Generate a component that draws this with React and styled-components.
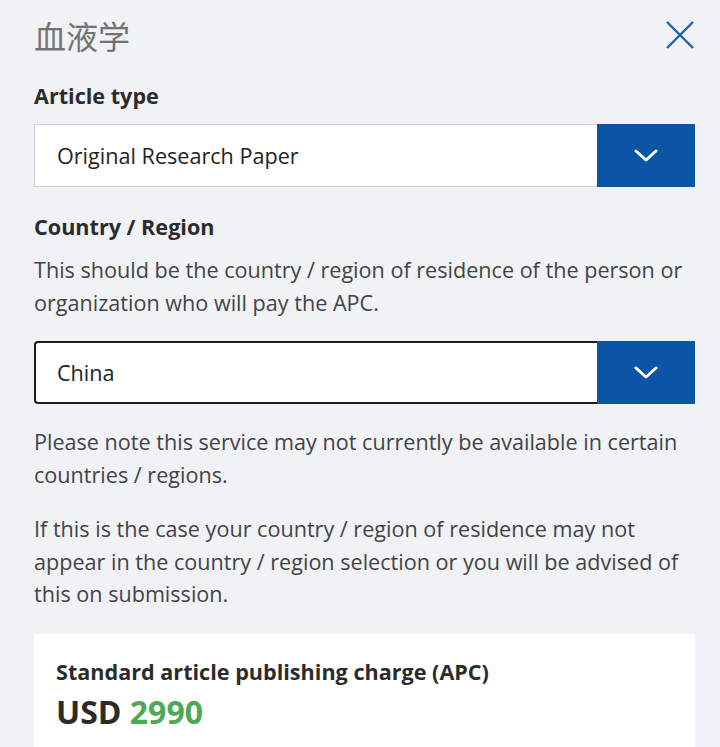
import React from "react";
import styled, { createGlobalStyle } from "styled-components";

const Global = createGlobalStyle`
  html, body { margin: 0; padding: 0; background: #f0f2f5; }
  body { font-family: "Open Sans", "Noto Sans CJK SC", sans-serif; color: #333; }
`;

const Page = styled.div`
  padding: 14px 25px 0 34px;
  min-height: 747px;
  box-sizing: border-box;
`;

const Header = styled.div`
  display: flex;
  align-items: center;
  justify-content: space-between;
  height: 42px;
`;

const Title = styled.h1`
  margin: 0;
  font-family: "Noto Sans CJK SC", sans-serif;
  font-weight: 400;
  font-size: 32px;
  color: #727272;
  line-height: 42px;
`;

const CloseBtn = styled.button`
  border: 0;
  background: none;
  padding: 0;
  width: 30px;
  height: 30px;
  display: flex;
  align-items: center;
  justify-content: center;
`;

const Label = styled.div`
  margin-top: ${p => p.$mt}px;
  font-weight: 700;
  font-size: 21.6px;
  line-height: 32px;
  color: #2b2b2b;
`;

const Para = styled.p`
  margin: ${p => p.$mt}px 0 0;
  font-size: 21.6px;
  line-height: 32.5px;
  color: #444;
`;

const Select = styled.div`
  margin-top: ${p => p.$mt}px;
  display: flex;
  height: 63px;
  box-sizing: border-box;
  background: #fff;
  border: ${p => (p.$focused ? "2px solid #1e1e1e" : "1px solid #cfd3d8")};
  border-right: 0;
  border-radius: ${p => (p.$focused ? "4px 0 0 4px" : "0")};
`;

const SelectValue = styled.div`
  flex: 1;
  display: flex;
  align-items: center;
  padding-left: ${p => (p.$focused ? 21 : 22)}px;
  font-size: 21.6px;
  color: #222;
`;

const SelectButton = styled.div`
  width: 98px;
  margin: ${p => (p.$focused ? "-2px 0" : "-1px 0")};
  background: #0b55a4;
  display: flex;
  align-items: center;
  justify-content: center;
`;

const Card = styled.div`
  margin-top: 23px;
  background: #fff;
  padding: 22px 22px 20px;
`;

const CardTitle = styled.div`
  font-weight: 700;
  font-size: 21.6px;
  line-height: 32px;
  color: #2b2b2b;
`;

const Price = styled.div`
  margin-top: 4px;
  font-weight: 700;
  font-size: 32px;
  line-height: 40px;
  color: #2b2b2b;
`;

const Amount = styled.span`
  color: #4caa55;
`;

const Chevron = () => (
  <svg width="24" height="14" viewBox="0 0 24 14">
    <path d="M2 2 L12 11 L22 2" fill="none" stroke="#fff" strokeWidth="3" strokeLinecap="round" strokeLinejoin="round" />
  </svg>
);

const CloseIcon = () => (
  <svg width="30" height="30" viewBox="0 0 30 30">
    <path d="M2 2 L28 28 M28 2 L2 28" stroke="#1f5fa9" strokeWidth="2.4" fill="none" />
  </svg>
);

const Dropdown = ({ value, focused, mt }) => (
  <Select $focused={focused} $mt={mt}>
    <SelectValue $focused={focused}>{value}</SelectValue>
    <SelectButton $focused={focused}>
      <Chevron />
    </SelectButton>
  </Select>
);

export default function App() {
  return (
    <>
      <Global />
      <Page>
        <Header>
          <Title>血液学</Title>
          <CloseBtn aria-label="close">
            <CloseIcon />
          </CloseBtn>
        </Header>
        <Label $mt={24}>Article type</Label>
        <Dropdown value="Original Research Paper" mt={12} />
        <Label $mt={24}>Country / Region</Label>
        <Para $mt={11}>
          This should be the country / region of residence of the person or organization who will pay the APC.
        </Para>
        <Dropdown value="China" focused mt={22} />
        <Para $mt={22}>
          Please note this service may not currently be available in certain countries / regions.
        </Para>
        <Para $mt={22}>
          If this is the case your country / region of residence may not appear in the country / region selection or you will be advised of this on submission.
        </Para>
        <Card>
          <CardTitle>Standard article publishing charge (APC)</CardTitle>
          <Price>
            USD <Amount>2990</Amount>
          </Price>
        </Card>
      </Page>
    </>
  );
}
